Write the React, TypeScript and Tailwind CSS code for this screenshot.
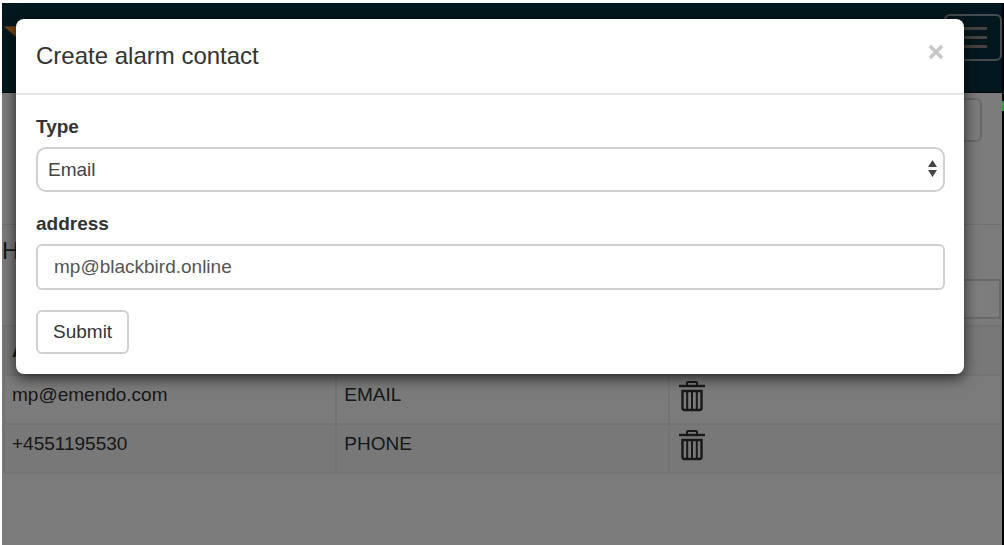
import React, { useState } from "react";

const rows = [
  { address: "mp@emendo.com", type: "EMAIL" },
  { address: "+4551195530", type: "PHONE" },
];

function TrashIcon() {
  return (
    <svg width="26" height="32" viewBox="0 0 26 32" fill="none" stroke="#303030" strokeWidth="2">
      <path d="M0 6h26" strokeWidth="2.400" />
      <path d="M8 6V3q0-1 1-1h8q1 0 1 1V6" />
      <path d="M3.500 11h19V28q0 2-2 2H5.500q-2 0-2-2z" strokeWidth="2.400" />
      <path d="M8.200 11v19M13 11v19M17.800 11v19" />
    </svg>
  );
}

function Header() {
  return (
    <header className="flex h-[90px] items-start justify-between border-b border-[#001018] bg-[#06303c] pt-[11px]">
      <svg className="mt-3 ml-[2px]" width="36" height="26" viewBox="0 0 36 26" fill="#e88c28">
        <path d="M0 0.500L30 0L18 16Z" />
      </svg>
      <button
        type="button"
        aria-label="Toggle navigation"
        className="flex h-[47px] w-[58px] flex-col items-end justify-center gap-[6px] rounded-md border-2 border-[#8e979b] pr-[13px]"
      >
        <span className="h-[3px] w-7 bg-[#8c857d]" />
        <span className="h-[3px] w-7 bg-[#8c857d]" />
        <span className="h-[3px] w-7 bg-[#8c857d]" />
      </button>
    </header>
  );
}

function ContactsPage() {
  return (
    <main className="text-[#303030]">
      <div className="flex h-[132px] justify-end border-b border-[#dedede] pt-[5px] pr-5">
        <button type="button" aria-label="Add contact" className="h-11 w-24 rounded-md border-2 border-[#d0d0d0]" />
      </div>
      <h2 className="h-[54px] pt-[10px] text-2xl">H</h2>
      <div className="flex justify-end pr-px">
        <input aria-label="Search contacts" className="block h-10 w-1/2 border-2 border-[#d4d4d4] bg-[#fafafa]" />
      </div>
      <div className="pt-[6px] pl-px">
        <table className="w-full table-fixed border-collapse text-[19px] leading-6">
          <thead>
            <tr className="h-[49px] bg-[#f0f0f0]">
              <th className="border-2 border-[#e6e6e6] px-[7px] text-left">A</th>
              <th className="border-2 border-[#e6e6e6]" />
              <th className="border-2 border-[#e6e6e6]" />
            </tr>
          </thead>
          <tbody>
            {rows.map((row) => (
              <tr key={row.address} className="h-[49px] even:bg-[#f0f0f0]">
                <td className="border-2 border-[#e6e6e6] px-[7px] pt-[7px] align-top">{row.address}</td>
                <td className="border-2 border-[#e6e6e6] px-[7px] pt-[7px] align-top">{row.type}</td>
                <td className="border-2 border-[#e6e6e6] px-[9px] pt-1 align-top">
                  <button type="button" aria-label={"Delete " + row.address} className="block">
                    <TrashIcon />
                  </button>
                </td>
              </tr>
            ))}
          </tbody>
        </table>
      </div>
    </main>
  );
}

function ContactDialog() {
  const [type, setType] = useState("Email");
  const [address, setAddress] = useState("mp@blackbird.online");
  return (
    <section
      role="dialog"
      aria-labelledby="dialog-title"
      className="mt-4 mr-[38px] ml-[14px] rounded-lg bg-white text-[19px] leading-6 text-[#333] shadow-[0_4px_14px_rgba(0,0,0,0.7)]"
    >
      <div className="flex h-[76px] items-center justify-between border-b-2 border-[#e5e5e5] px-5">
        <h1 id="dialog-title" className="text-2xl">
          Create alarm contact
        </h1>
        <button type="button" aria-label="Close" className="mb-2">
          <svg width="16" height="16" viewBox="0 0 16 16" stroke="#c8c8c8" strokeWidth="3.500">
            <path d="M2 2l12 12M14 2L2 14" />
          </svg>
        </button>
      </div>
      <form className="pt-5 pr-[19px] pb-5 pl-5" onSubmit={(e) => e.preventDefault()}>
        <label htmlFor="contact-type" className="mb-2 block font-bold">
          Type
        </label>
        <div className="relative mb-5">
          <select
            id="contact-type"
            value={type}
            onChange={(e) => setType(e.target.value)}
            className="block h-[45px] w-full appearance-none rounded-[10px] border-2 border-[#d0d0d0] bg-white px-[10px] text-[#444]"
          >
            <option>Email</option>
            <option>Phone</option>
          </select>
          <svg
            className="pointer-events-none absolute top-[13px] right-2"
            width="9"
            height="17"
            viewBox="0 0 9 17"
            fill="#444"
          >
            <path d="M0 7L4.500 0L9 7ZM0 10L4.500 17L9 10Z" />
          </svg>
        </div>
        <label htmlFor="contact-address" className="mb-2 block font-bold">
          address
        </label>
        <input
          id="contact-address"
          value={address}
          onChange={(e) => setAddress(e.target.value)}
          className="mb-5 block h-[46px] w-full rounded-md border-2 border-[#d0d0d0] bg-white px-4 text-[#555]"
        />
        <button type="submit" className="block h-11 rounded-md border-2 border-[#d0d0d0] bg-white px-[15px]">
          Submit
        </button>
      </form>
    </section>
  );
}

export default function App() {
  return (
    <div className="flex min-h-screen flex-col bg-white font-['Liberation_Sans',Arial,sans-serif]">
      <div className="mt-[3px] flex flex-1 bg-black pr-[2px]">
        <div className="w-[2px] shrink-0 bg-white" />
        <div className="relative flex-1 bg-[#f6f6f6]">
          <Header />
          <ContactsPage />
          <div className="absolute inset-0 bg-black/50">
            <ContactDialog />
          </div>
          <span className="absolute top-[98px] -right-[2px] h-[10px] w-[2px] bg-[#36a336]" />
        </div>
      </div>
    </div>
  );
}
